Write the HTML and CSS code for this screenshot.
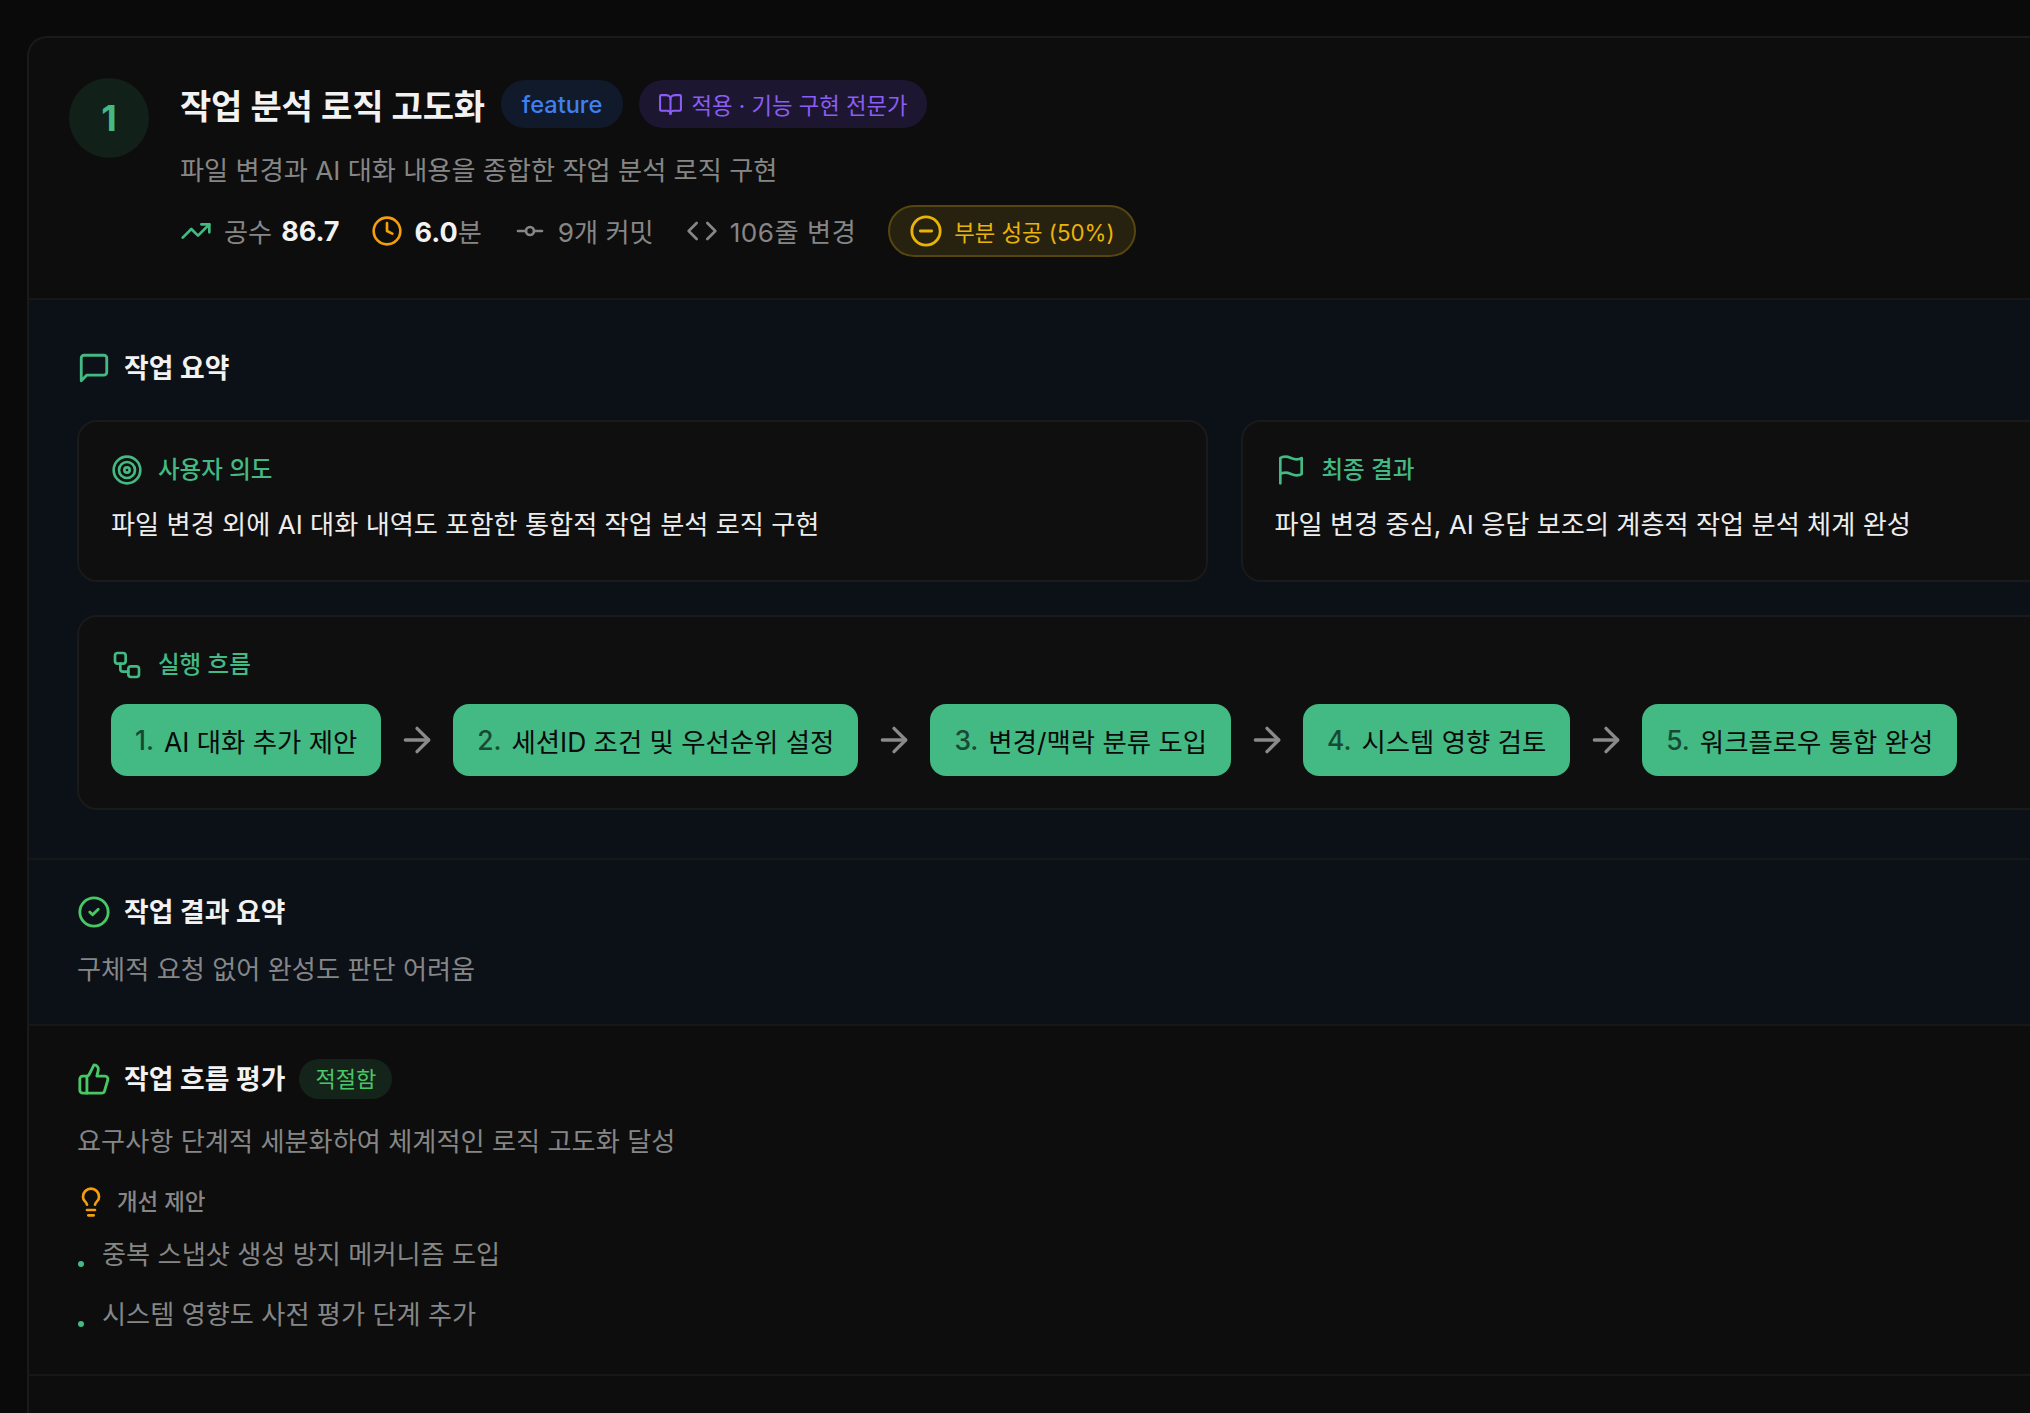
FILE: index.html
```html
<!DOCTYPE html>
<html lang="ko">
<head>
    <meta charset="UTF-8">
    <meta name="viewport" content="width=device-width, initial-scale=1.0">
    <title>작업 분석</title>
    <link rel="stylesheet" href="styles.css">
</head>
<body>
    <svg width="0" height="0" class="icon-defs">
        <symbol id="i-trend" viewBox="0 0 24 24"><path d="M22 7 13.5 15.5 8.5 10.5 2 17"/><path d="M16 7h6v6"/></symbol>
        <symbol id="i-clock" viewBox="0 0 24 24"><circle cx="12" cy="12" r="10"/><path d="M12 6v6l4 2"/></symbol>
        <symbol id="i-commit" viewBox="0 0 24 24"><circle cx="12" cy="12" r="3"/><path d="M3 12h6"/><path d="M15 12h6"/></symbol>
        <symbol id="i-code" viewBox="0 0 24 24"><path d="m16 18 6-6-6-6"/><path d="m8 6-6 6 6 6"/></symbol>
        <symbol id="i-book" viewBox="0 0 24 24"><path d="M12 7v14"/><path d="M3 18a1 1 0 0 1-1-1V4a1 1 0 0 1 1-1h5a4 4 0 0 1 4 4 4 4 0 0 1 4-4h5a1 1 0 0 1 1 1v13a1 1 0 0 1-1 1h-6a3 3 0 0 0-3 3 3 3 0 0 0-3-3z"/></symbol>
        <symbol id="i-minus" viewBox="0 0 24 24"><circle cx="12" cy="12" r="10"/><path d="M8 12h8"/></symbol>
        <symbol id="i-message" viewBox="0 0 24 24"><path d="M21 15a2 2 0 0 1-2 2H7l-4 4V5a2 2 0 0 1 2-2h14a2 2 0 0 1 2 2z"/></symbol>
        <symbol id="i-target" viewBox="0 0 24 24"><circle cx="12" cy="12" r="10"/><circle cx="12" cy="12" r="6"/><circle cx="12" cy="12" r="2"/></symbol>
        <symbol id="i-flag" viewBox="0 0 24 24"><path d="M4 15s1-1 4-1 5 2 8 2 4-1 4-1V3s-1 1-4 1-5-2-8-2-4 1-4 1z"/><path d="M4 22v-7"/></symbol>
        <symbol id="i-workflow" viewBox="0 0 24 24"><rect x="3" y="3" width="8" height="8" rx="2"/><path d="M7 11v4a2 2 0 0 0 2 2h4"/><rect x="13" y="13" width="8" height="8" rx="2"/></symbol>
        <symbol id="i-check" viewBox="0 0 24 24"><circle cx="12" cy="12" r="10"/><path d="m9 12 2 2 4-4"/></symbol>
        <symbol id="i-thumb" viewBox="0 0 24 24"><path d="M7 10v12"/><path d="M15 5.88 14 10h5.83a2 2 0 0 1 1.92 2.56l-2.33 8A2 2 0 0 1 17.5 22H4a2 2 0 0 1-2-2v-8a2 2 0 0 1 2-2h2.76a2 2 0 0 0 1.79-1.11L12 2a3.13 3.13 0 0 1 3 3.88Z"/></symbol>
        <symbol id="i-bulb" viewBox="0 0 24 24"><path d="M15 14c.2-1 .7-1.7 1.500-2.500 1-.9 1.500-2.200 1.500-3.500A6 6 0 0 0 6 8c0 1 .2 2.200 1.500 3.500.7.700 1.300 1.500 1.500 2.500"/><path d="M9 18h6"/><path d="M10 22h4"/></symbol>
        <symbol id="i-arrow" viewBox="0 0 24 24"><path d="M5 12h14"/><path d="m12 5 7 7-7 7"/></symbol>
    </svg>

    <div class="card">
        <header class="task-head">
            <div class="task-num">1</div>
            <div class="task-info">
                <div class="title-row">
                    <h1>작업 분석 로직 고도화</h1>
                    <span class="pill pill-blue">feature</span>
                    <span class="pill pill-purple"><svg class="icon icon-sm"><use href="#i-book"/></svg>적용 · 기능 구현 전문가</span>
                </div>
                <p class="task-desc">파일 변경과 AI 대화 내용을 종합한 작업 분석 로직 구현</p>
                <div class="stats">
                    <span class="stat stat-effort"><svg class="icon c-green"><use href="#i-trend"/></svg>공수 <b>86.7</b></span>
                    <span class="stat"><svg class="icon c-amber"><use href="#i-clock"/></svg><span><b>6.0</b>분</span></span>
                    <span class="stat"><svg class="icon"><use href="#i-commit"/></svg>9개 커밋</span>
                    <span class="stat stat-lines"><svg class="icon"><use href="#i-code"/></svg>106줄 변경</span>
                    <span class="status"><svg class="icon"><use href="#i-minus"/></svg>부분 성공 (50%)</span>
                </div>
            </div>
        </header>

        <section class="section section-tint section-summary">
            <h2 class="sec-title"><svg class="icon c-green"><use href="#i-message"/></svg>작업 요약</h2>
            <div class="two-col">
                <div class="box">
                    <h3 class="box-label"><svg class="icon"><use href="#i-target"/></svg>사용자 의도</h3>
                    <p class="box-text">파일 변경 외에 AI 대화 내역도 포함한 통합적 작업 분석 로직 구현</p>
                </div>
                <div class="box">
                    <h3 class="box-label"><svg class="icon"><use href="#i-flag"/></svg>최종 결과</h3>
                    <p class="box-text">파일 변경 중심, AI 응답 보조의 계층적 작업 분석 체계 완성</p>
                </div>
            </div>
            <div class="box box-flow">
                <h3 class="box-label"><svg class="icon"><use href="#i-workflow"/></svg>실행 흐름</h3>
                <div class="flow">
                    <div class="step"><span class="step-no">1.</span>AI 대화 추가 제안</div>
                    <svg class="icon arrow"><use href="#i-arrow"/></svg>
                    <div class="step"><span class="step-no">2.</span>세션ID 조건 및 우선순위 설정</div>
                    <svg class="icon arrow"><use href="#i-arrow"/></svg>
                    <div class="step"><span class="step-no">3.</span>변경/맥락 분류 도입</div>
                    <svg class="icon arrow"><use href="#i-arrow"/></svg>
                    <div class="step"><span class="step-no">4.</span>시스템 영향 검토</div>
                    <svg class="icon arrow"><use href="#i-arrow"/></svg>
                    <div class="step"><span class="step-no">5.</span>워크플로우 통합 완성</div>
                </div>
            </div>
        </section>

        <section class="section section-tint section-result">
            <h2 class="sec-title"><svg class="icon c-lime"><use href="#i-check"/></svg>작업 결과 요약</h2>
            <p class="sec-text">구체적 요청 없어 완성도 판단 어려움</p>
        </section>

        <section class="section section-eval">
            <h2 class="sec-title"><svg class="icon c-lime"><use href="#i-thumb"/></svg>작업 흐름 평가<span class="pill-ok">적절함</span></h2>
            <p class="sec-text">요구사항 단계적 세분화하여 체계적인 로직 고도화 달성</p>
            <h4 class="tip-label"><svg class="icon c-amber"><use href="#i-bulb"/></svg>개선 제안</h4>
            <ul class="tips">
                <li>중복 스냅샷 생성 방지 메커니즘 도입</li>
                <li>시스템 영향도 사전 평가 단계 추가</li>
            </ul>
        </section>
    </div>
</body>
</html>
```

FILE: styles.css
```css
html, body {
    height: 100%;
}
body {
    margin: 0;
    background: #0a0a0a;
    font-family: Inter, "Noto Sans CJK KR", sans-serif;
    color: #f2f2f2;
    overflow: hidden;
    padding: 36px 0 0 27px;
    box-sizing: border-box;
}
h1, h2, h3, h4, p, ul {
    margin: 0;
    padding: 0;
}
.icon-defs {
    position: absolute;
}
.icon {
    width: 32px;
    height: 32px;
    flex: none;
    fill: none;
    stroke: currentColor;
    stroke-width: 2;
    stroke-linecap: round;
    stroke-linejoin: round;
}
.icon-sm {
    width: 25px;
    height: 25px;
}
.c-green { color: #43b984; }
.c-amber { color: #f59e0b; }
.c-lime { color: #4ac765; }

.card {
    width: 2396px;
    min-height: 100%;
    background: #0d0d0d;
    border: 2px solid #1a1a1a;
    border-bottom: none;
    border-radius: 20px 20px 0 0;
    box-sizing: border-box;
}
.task-head {
    display: flex;
    gap: 31px;
    padding: 40px 40px 41px 40px;
    border-bottom: 2px solid #171717;
}
.task-num {
    width: 80px;
    height: 80px;
    flex: none;
    border-radius: 50%;
    background: #12201a;
    color: #43b984;
    font-size: 36px;
    font-weight: 700;
    display: flex;
    align-items: center;
    justify-content: center;
}
.title-row {
    display: flex;
    align-items: center;
    gap: 16px;
    height: 52px;
}
h1 {
    font-size: 34px;
    font-weight: 600;
    letter-spacing: -0.2px;
}
.pill {
    height: 48px;
    padding: 0 21px;
    border-radius: 24px;
    display: flex;
    align-items: center;
    gap: 8px;
    font-size: 23.6px;
    box-sizing: border-box;
}
.pill-blue {
    background: #101a2b;
    color: #3f80f0;
    font-weight: 500;
}
.pill-purple {
    padding: 0 19px;
    background: #1c1630;
    color: #8b5cf6;
    font-size: 22.3px;
}
.task-desc {
    margin-top: 22px;
    font-size: 26.2px;
    line-height: 38px;
    color: #868686;
}
.stats {
    display: flex;
    align-items: center;
    gap: 32px;
    margin-top: 15px;
    font-size: 26.2px;
    color: #868686;
}
.stat {
    display: flex;
    align-items: center;
    gap: 12px;
    white-space: nowrap;
}
.stat b {
    color: #f2f2f2;
    font-weight: 700;
    font-size: 27px;
}
.stat-effort {
    margin-right: -1px;
}
.stat-effort b {
    margin-left: -3px;
}
.stat-lines {
    letter-spacing: 0.5px;
}
.status {
    height: 52px;
    padding: 0 19px;
    border: 2px solid #55460f;
    background: #272110;
    border-radius: 26px;
    color: #eab308;
    font-size: 22.3px;
    display: flex;
    align-items: center;
    gap: 11px;
    box-sizing: border-box;
    white-space: nowrap;
}
.status .icon {
    width: 34px;
    height: 34px;
}

.section {
    padding: 50px 50px 48px 48px;
    border-bottom: 2px solid #171717;
}
.section-tint {
    background: #0c1017;
}
.section-result {
    padding-top: 34px;
    padding-bottom: 35px;
}
.section-eval {
    padding-top: 33px;
    padding-bottom: 40px;
}
.sec-title {
    display: flex;
    align-items: center;
    gap: 13px;
    font-size: 26.8px;
    line-height: 36px;
    font-weight: 600;
}
.sec-title .icon {
    width: 34px;
    height: 34px;
}
.two-col {
    display: grid;
    grid-template-columns: 1fr 1fr;
    gap: 33px;
    margin-top: 34px;
}
.box {
    background: #0f0f0f;
    border: 2px solid #1a1a1a;
    border-radius: 20px;
    padding: 32px 32px 36px;
    box-sizing: border-box;
}
.box-label {
    display: flex;
    align-items: center;
    gap: 15px;
    font-size: 23.5px;
    line-height: 30px;
    font-weight: 500;
    color: #43b984;
}
.box-text {
    margin-top: 20px;
    font-size: 26.2px;
    line-height: 38px;
    color: #ededed;
}
.box-flow {
    margin-top: 33px;
    padding-bottom: 32px;
}
.flow {
    display: flex;
    align-items: center;
    gap: 16px;
    margin-top: 23px;
}
.step {
    height: 72px;
    padding: 0 24px;
    background: #43b984;
    border-radius: 16px;
    color: #0a0a0a;
    font-size: 26.4px;
    display: flex;
    align-items: center;
    gap: 10px;
    white-space: nowrap;
}
.step-no {
    color: #174a34;
    font-weight: 500;
}
.arrow {
    width: 40px;
    height: 40px;
    color: #8a8a8a;
}
.sec-text {
    margin-top: 24px;
    font-size: 26.2px;
    line-height: 38px;
    color: #868686;
}
.section-result .sec-text {
    margin-top: 21px;
}
.pill-ok {
    height: 40px;
    padding: 0 16px;
    margin-left: 1px;
    border-radius: 20px;
    background: #14241a;
    color: #4ac765;
    font-size: 22px;
    font-weight: 400;
    display: flex;
    align-items: center;
}
.tip-label {
    display: flex;
    align-items: center;
    gap: 10px;
    margin-top: 25px;
    font-size: 22.4px;
    line-height: 30px;
    font-weight: 500;
    color: #868686;
}
.tip-label .icon {
    margin-left: -2px;
}
.tips {
    list-style: none;
    margin-top: 18px;
    display: flex;
    flex-direction: column;
    gap: 22px;
}
.tips li {
    position: relative;
    padding-left: 25px;
    font-size: 26.2px;
    line-height: 38px;
    color: #868686;
}
.tips li::before {
    content: "";
    position: absolute;
    left: 1px;
    top: 25px;
    width: 6px;
    height: 6px;
    border-radius: 50%;
    background: #43b984;
}
```
